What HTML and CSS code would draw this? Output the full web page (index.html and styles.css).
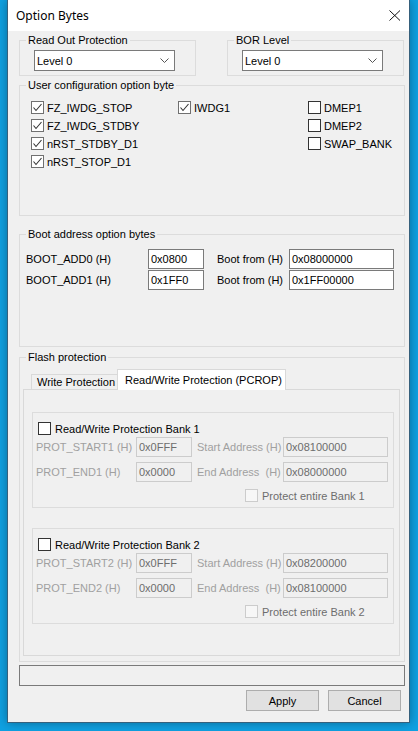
FILE: index.html
```html
<!DOCTYPE html>
<html>
<head>
<meta charset="utf-8">
<title>Option Bytes</title>
<link rel="stylesheet" href="styles.css">
</head>
<body>
<div class="window">
  <div class="titlebar">
    <span class="title">Option Bytes</span>
    <svg class="close" width="12" height="11" viewBox="0 0 12 11"><path d="M0.5 0.5 L11 10.5 M11 0.5 L0.5 10.5" stroke="#111" stroke-width="1" fill="none"/></svg>
  </div>
  <div class="content">
    <div class="toprow">
      <fieldset class="group g-small">
        <legend>Read Out Protection</legend>
        <div class="small-body">
          <div class="combo"><span>Level 0</span><svg class="chev" width="9" height="5" viewBox="0 0 9 5"><polyline points="0.5,0.5 4.5,4.5 8.5,0.5" stroke="#555" stroke-width="1" fill="none"/></svg></div>
        </div>
      </fieldset>
      <fieldset class="group g-small">
        <legend>BOR Level</legend>
        <div class="small-body">
          <div class="combo"><span>Level 0</span><svg class="chev" width="9" height="5" viewBox="0 0 9 5"><polyline points="0.5,0.5 4.5,4.5 8.5,0.5" stroke="#555" stroke-width="1" fill="none"/></svg></div>
        </div>
      </fieldset>
    </div>

    <fieldset class="group g-user">
      <legend>User configuration option byte</legend>
      <div class="user-grid">
        <label class="cb"><span class="box checked"><svg width="11" height="11" viewBox="0 0 11 11"><polyline points="1.5,5.5 4,8.5 9.5,2" stroke="#333" stroke-width="1.1" fill="none"/></svg></span>FZ_IWDG_STOP</label>
        <label class="cb"><span class="box checked"><svg width="11" height="11" viewBox="0 0 11 11"><polyline points="1.5,5.5 4,8.5 9.5,2" stroke="#333" stroke-width="1.1" fill="none"/></svg></span>IWDG1</label>
        <label class="cb"><span class="box"></span>DMEP1</label>
        <label class="cb"><span class="box checked"><svg width="11" height="11" viewBox="0 0 11 11"><polyline points="1.5,5.5 4,8.5 9.5,2" stroke="#333" stroke-width="1.1" fill="none"/></svg></span>FZ_IWDG_STDBY</label>
        <div></div>
        <label class="cb"><span class="box"></span>DMEP2</label>
        <label class="cb"><span class="box checked"><svg width="11" height="11" viewBox="0 0 11 11"><polyline points="1.5,5.5 4,8.5 9.5,2" stroke="#333" stroke-width="1.1" fill="none"/></svg></span>nRST_STDBY_D1</label>
        <div></div>
        <label class="cb"><span class="box"></span>SWAP_BANK</label>
        <label class="cb"><span class="box checked"><svg width="11" height="11" viewBox="0 0 11 11"><polyline points="1.5,5.5 4,8.5 9.5,2" stroke="#333" stroke-width="1.1" fill="none"/></svg></span>nRST_STOP_D1</label>
      </div>
    </fieldset>

    <fieldset class="group g-boot">
      <legend>Boot address option bytes</legend>
      <div class="boot-body">
        <div class="brow">
          <span class="blbl1">BOOT_ADD0 (H)</span>
          <div class="input in-s">0x0800</div>
          <span class="blbl2">Boot from (H)</span>
          <div class="input in-l">0x08000000</div>
        </div>
        <div class="brow">
          <span class="blbl1">BOOT_ADD1 (H)</span>
          <div class="input in-s">0x1FF0</div>
          <span class="blbl2">Boot from (H)</span>
          <div class="input in-l">0x1FF00000</div>
        </div>
      </div>
    </fieldset>

    <fieldset class="group g-flash">
      <legend>Flash protection</legend>
      <div class="flash-body">
        <div class="tabs">
          <div class="tab">Write Protection</div>
          <div class="tab active">Read/Write Protection (PCROP)</div>
        </div>
        <div class="panel">
          <div class="bank">
            <label class="bhead"><span class="box"></span>Read/Write Protection Bank 1</label>
            <div class="prow first">
              <span class="pl1">PROT_START1 (H)</span>
              <div class="input dis in-s">0x0FFF</div>
              <span class="pl2">Start Address (H)</span>
              <div class="input dis in-l">0x08100000</div>
            </div>
            <div class="prow second">
              <span class="pl1">PROT_END1 (H)</span>
              <div class="input dis in-s">0x0000</div>
              <span class="pl2">End Address&nbsp; (H)</span>
              <div class="input dis in-l">0x08000000</div>
            </div>
            <label class="bprot"><span class="box dis"></span>Protect entire Bank 1</label>
          </div>
          <div class="bank bank2">
            <label class="bhead"><span class="box"></span>Read/Write Protection Bank 2</label>
            <div class="prow first">
              <span class="pl1">PROT_START2 (H)</span>
              <div class="input dis in-s">0x0FFF</div>
              <span class="pl2">Start Address (H)</span>
              <div class="input dis in-l">0x08200000</div>
            </div>
            <div class="prow second">
              <span class="pl1">PROT_END2 (H)</span>
              <div class="input dis in-s">0x0000</div>
              <span class="pl2">End Address&nbsp; (H)</span>
              <div class="input dis in-l">0x08100000</div>
            </div>
            <label class="bprot"><span class="box dis"></span>Protect entire Bank 2</label>
          </div>
        </div>
      </div>
    </fieldset>

    <div class="status"></div>
    <div class="buttons">
      <button class="btn">Apply</button>
      <button class="btn">Cancel</button>
    </div>
  </div>
</div>
</body>
</html>
```
FILE: styles.css
```css
* { box-sizing: border-box; }
html, body { margin: 0; padding: 0; }
body {
  width: 418px;
  height: 731px;
  overflow: hidden;
  background: #0fa1e2;
  font-family: "Liberation Sans", Arial, sans-serif;
  font-size: 11px;
  color: #000;
}
.window {
  margin-left: 7px;
  width: 403px;
  height: 723px;
  background: #f0f0f0;
  border: 1px solid #35607c;
  border-top: 0;
  box-shadow: 0 0 10px rgba(0, 0, 0, 0.35);
}
.titlebar {
  height: 31px;
  background: #fff;
  display: flex;
  align-items: center;
  padding: 0 8px 0 8px;
}
.title {
  font-family: "Noto Sans", "Open Sans", sans-serif;
  font-size: 12px;
  color: #000;
}
.close { margin-left: auto; display: block; }

.content { padding: 0 4px 0 11px; }

.group {
  margin: 0;
  padding: 0;
  border: 1px solid #dcdcdc;
  min-width: 0;
}
.group legend {
  font-size: 11px;
  line-height: 13px;
  padding: 0 2px;
  margin-left: 6px;
}

.toprow { display: flex; gap: 31px; margin-top: 3px; }
.g-small { width: 177px; }
.small-body { padding: 3px 0 4px 14px; }
.combo {
  width: 141px;
  height: 21px;
  border: 1px solid #7a7a7a;
  background: #fff;
  display: flex;
  align-items: center;
  justify-content: space-between;
  padding: 0 5px 0 2px;
}
.chev { display: block; }

.g-user { margin-top: 3px; }
.user-grid {
  height: 123px;
  padding: 7px 0 0 11px;
  display: grid;
  grid-template-columns: 147px 130px 1fr;
  grid-auto-rows: 17px;
  row-gap: 1px;
  align-content: start;
}
.cb { display: flex; align-items: center; gap: 3px; white-space: nowrap; }
.box {
  width: 13px;
  height: 13px;
  flex: none;
  border: 1px solid #333;
  background: #fff;
  display: block;
}
.box svg { display: block; }
.box.checked { border-color: #707070; }
.box.dis { border-color: #cccccc; background: #f7f7f7; }

.g-boot { margin-top: 12px; }
.boot-body {
  height: 105px;
  padding: 8px 0 0 6px;
  display: flex;
  flex-direction: column;
  gap: 1px;
}
.brow { display: flex; align-items: center; height: 20px; }
.blbl1 { width: 122px; }
.blbl2 { width: 72px; margin-left: 13px; }
.input {
  height: 20px;
  border: 1px solid #7a7a7a;
  background: #fff;
  padding-left: 2px;
  display: flex;
  align-items: center;
  flex: none;
}
.in-s { width: 56px; }
.in-l { width: 105px; }
.input.dis { border-color: #cccccc; background: #f0f0f0; color: #6d6d6d; }

.g-flash { margin-top: 4px; }
.flash-body {
  height: 297px;
  padding: 5px 4px 5px 3px;
  display: flex;
  flex-direction: column;
}
.tabs { display: flex; align-items: flex-end; height: 20px; padding-left: 8px; flex: none; }
.tab {
  height: 15px;
  width: 86px;
  border: 1px solid #d9d9d9;
  border-bottom: 0;
  border-right: 0;
  padding: 0 0 0 5px;
  display: flex;
  align-items: center;
  background: #f0f0f0;
  white-space: nowrap;
}
.tab.active {
  height: 21px;
  width: 169px;
  margin-bottom: -1px;
  border-right: 1px solid #d9d9d9;
  background: #fff;
  padding-left: 7px;
  padding-bottom: 1px;
  position: relative;
  z-index: 1;
}
.panel {
  flex: 1;
  border: 1px solid #d9d9d9;
  padding: 22px 5px 0 8px;
}
.bank {
  border: 1px solid #dcdcdc;
  height: 96px;
  padding-top: 9px;
}
.bank2 { margin-top: 20px; }
.bhead { display: flex; align-items: center; height: 13px; margin-left: 5px; gap: 4px; white-space: nowrap; }
.prow { display: flex; align-items: center; height: 20px; padding-left: 3px; color: #a0a0a0; }
.prow.first { margin-top: 2px; }
.prow.second { margin-top: 5px; }
.pl1 { width: 100px; white-space: nowrap; }
.pl2 { width: 86px; margin-left: 5px; white-space: nowrap; }
.bprot { display: flex; align-items: center; height: 13px; margin: 7px 0 0 212px; gap: 4px; color: #6d6d6d; white-space: nowrap; }

.status {
  margin-top: 3px;
  height: 21px;
  border: 1px solid #7a7a7a;
  background: #f0f0f0;
}
.buttons {
  display: flex;
  justify-content: flex-end;
  gap: 9px;
  margin-top: 4px;
  padding-right: 4px;
}
.btn {
  width: 73px;
  height: 21px;
  padding: 0;
  margin: 0;
  background: #e1e1e1;
  border: 1px solid #adadad;
  font-family: "Liberation Sans", Arial, sans-serif;
  font-size: 11px;
  color: #000;
}
```
